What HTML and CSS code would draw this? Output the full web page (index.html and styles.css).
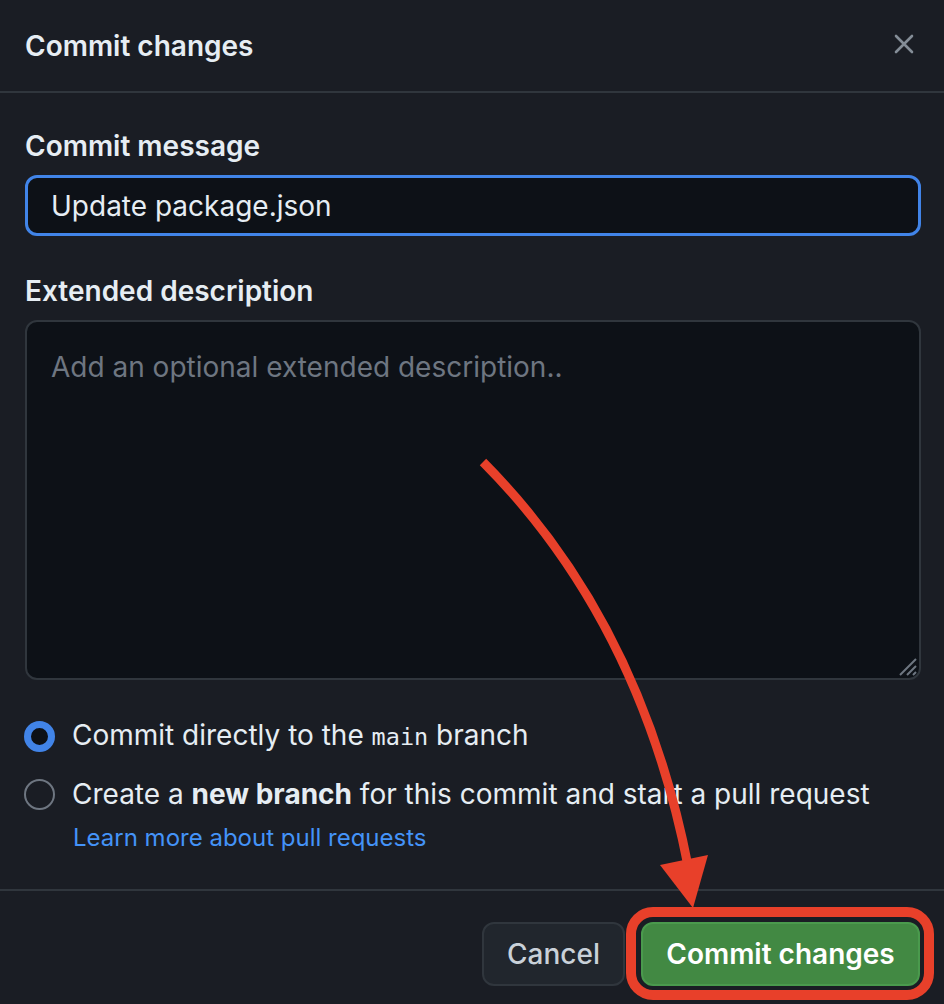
FILE: index.html
```html
<!DOCTYPE html>
<html lang="en">
<head>
<meta charset="utf-8">
<title>Commit changes</title>
<link rel="stylesheet" href="styles.css">
</head>
<body>
<div class="dialog">
  <header class="dialog-header">
    <h1 class="dialog-title">Commit changes</h1>
    <button class="close-btn" aria-label="Close">
      <svg width="20" height="20" viewBox="0 0 20 20"><path d="M2 2 L18 18 M18 2 L2 18" stroke="#848d97" stroke-width="2.6" stroke-linecap="round" fill="none"/></svg>
    </button>
  </header>
  <main class="dialog-body">
    <label class="field-label">Commit message</label>
    <div class="input">Update package.json</div>
    <label class="field-label second">Extended description</label>
    <div class="textarea">
      <span class="placeholder">Add an optional extended description..</span>
      <svg class="grip" width="24" height="24" viewBox="0 0 24 24"><path d="M22 6 L6 22 M22 13 L13 22 M22 19 L19 22" stroke="#6e7681" stroke-width="2" fill="none"/></svg>
    </div>
    <div class="radio-row first">
      <span class="radio checked"></span>
      <span class="radio-text">Commit directly to the <code>main</code> branch</span>
    </div>
    <div class="radio-row">
      <span class="radio"></span>
      <span class="radio-text">Create a <strong>new branch</strong> for this commit and start a pull request</span>
    </div>
    <a class="learn-link" href="#">Learn more about pull requests</a>
  </main>
  <footer class="dialog-footer">
    <button class="btn btn-cancel">Cancel</button>
    <button class="btn btn-primary">Commit changes</button>
  </footer>
</div>
<svg class="annotation" width="944" height="1004" viewBox="0 0 944 1004">
  <path d="M483 462 Q 640 620 688 866" stroke="#e8402a" stroke-width="9" fill="none"/>
  <polygon points="660,865 708,855 693,908" fill="#e8402a"/>
  <rect x="631" y="912" width="298" height="83" rx="22" ry="22" stroke="#e8402a" stroke-width="10" fill="none"/>
</svg>
</body>
</html>
```
FILE: styles.css
```css
html, body {
  margin: 0;
  padding: 0;
}
body {
  background: #1a1d24;
  font-family: Inter, "Noto Sans", "Liberation Sans", sans-serif;
  color: #e6edf3;
  width: 944px;
  height: 1004px;
  overflow: hidden;
  position: relative;
}
.dialog {
  width: 944px;
  display: flex;
  flex-direction: column;
}
.dialog-header {
  height: 91px;
  border-bottom: 2px solid #30363d;
  display: flex;
  align-items: center;
  justify-content: space-between;
  padding: 0 30px 0 25px;
}
.dialog-title {
  margin: 0;
  font-size: 28px;
  font-weight: 600;
  color: #e6edf3;
}
.close-btn {
  background: none;
  border: 0;
  padding: 0;
  display: flex;
  margin-top: -4px;
}
.dialog-body {
  padding: 37px 25px 0 25px;
  display: flex;
  flex-direction: column;
}
.field-label {
  font-size: 28px;
  font-weight: 600;
  line-height: 32px;
  color: #e6edf3;
}
.field-label.second {
  margin-top: 39px;
}
.input {
  margin-top: 13px;
  height: 55px;
  border: 3px solid #4184e8;
  border-radius: 12px;
  background: #0d1117;
  box-sizing: content-box;
  width: 867px;
  padding: 0 0 0 23px;
  display: flex;
  align-items: center;
  font-size: 28px;
  color: #e6edf3;
}
.textarea {
  margin-top: 13px;
  height: 356px;
  width: 868px;
  border: 2px solid #30363d;
  border-radius: 12px;
  background: #0d1117;
  padding: 0 0 0 24px;
  position: relative;
}
.placeholder {
  display: block;
  margin-top: 29px;
  font-size: 28px;
  line-height: 32px;
  color: #6e7681;
}
.grip {
  position: absolute;
  right: 1px;
  bottom: 1px;
}
.radio-row {
  display: flex;
  align-items: center;
  gap: 16px;
  margin-top: 25px;
  font-size: 28px;
  line-height: 32px;
  color: #e6edf3;
}
.radio-row.first {
  margin-top: 39px;
}
.radio {
  width: 31px;
  height: 31px;
  border-radius: 50%;
  box-sizing: border-box;
  border: 2px solid #6e7681;
  margin-left: -1px;
  margin-right: 1px;
}
.radio.checked {
  border: 7px solid #4184e8;
  background: #0d1117;
}
.radio-text code {
  font-family: "DejaVu Sans Mono", "Liberation Mono", monospace;
  font-size: 23.5px;
}
.radio-text strong {
  font-weight: 700;
}
.learn-link {
  margin: 14px 0 0 48px;
  font-size: 24px;
  line-height: 28px;
  color: #4493f8;
  text-decoration: none;
}
.dialog-footer {
  margin-top: 37px;
  border-top: 2px solid #30363d;
  display: flex;
  justify-content: flex-end;
  gap: 16px;
  padding: 31px 24px 0 0;
}
.btn {
  height: 64px;
  border-radius: 12px;
  font-family: Inter, "Noto Sans", "Liberation Sans", sans-serif;
  font-size: 28px;
  font-weight: 600;
  padding: 0;
  box-sizing: border-box;
}
.btn-cancel {
  background: #21262d;
  border: 2px solid #30363d;
  color: #c9d1d9;
  font-weight: 500;
  width: 143px;
}
.btn-primary {
  background: #428943;
  border: 2px solid #4a9a4d;
  color: #ffffff;
  width: 279px;
}
.annotation {
  position: absolute;
  left: 0;
  top: 0;
  pointer-events: none;
}
```
